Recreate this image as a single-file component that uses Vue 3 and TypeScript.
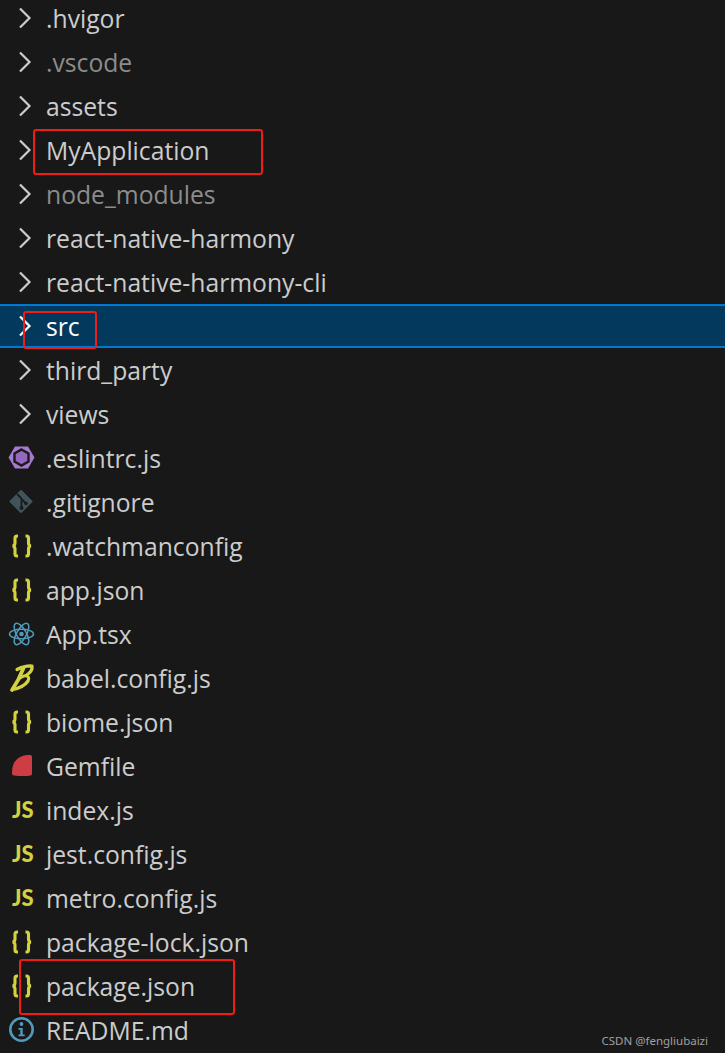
<script setup lang="ts">
type Row = { name: string; kind: string; muted?: boolean; selected?: boolean };

const rows: Row[] = [
  { name: '.hvigor', kind: 'folder' },
  { name: '.vscode', kind: 'folder', muted: true },
  { name: 'assets', kind: 'folder' },
  { name: 'MyApplication', kind: 'folder' },
  { name: 'node_modules', kind: 'folder', muted: true },
  { name: 'react-native-harmony', kind: 'folder' },
  { name: 'react-native-harmony-cli', kind: 'folder' },
  { name: 'src', kind: 'folder', selected: true },
  { name: 'third_party', kind: 'folder' },
  { name: 'views', kind: 'folder' },
  { name: '.eslintrc.js', kind: 'eslint' },
  { name: '.gitignore', kind: 'git' },
  { name: '.watchmanconfig', kind: 'json' },
  { name: 'app.json', kind: 'json' },
  { name: 'App.tsx', kind: 'react' },
  { name: 'babel.config.js', kind: 'babel' },
  { name: 'biome.json', kind: 'json' },
  { name: 'Gemfile', kind: 'gem' },
  { name: 'index.js', kind: 'js' },
  { name: 'jest.config.js', kind: 'js' },
  { name: 'metro.config.js', kind: 'js' },
  { name: 'package-lock.json', kind: 'json' },
  { name: 'package.json', kind: 'json' },
  { name: 'README.md', kind: 'info' },
];
</script>

<template>
  <div class="tree">
    <div class="list">
      <div
        v-for="row in rows"
        :key="row.name"
        class="row"
        :class="{ muted: row.muted, selected: row.selected }"
      >
        <span class="icon">
          <svg v-if="row.kind === 'folder'" width="36" height="36" viewBox="0 0 36 36">
            <path d="M20 8.500 L29.500 18 L20 27.500" fill="none" class="chev" stroke-width="2.200" />
          </svg>
          <svg v-else-if="row.kind === 'eslint'" width="36" height="36" viewBox="0 0 36 36">
            <path d="M15 6.500h13l6.500 11-6.500 11H15l-6.500-11z" fill="#a779d0" />
            <path d="M21.500 9.500l7 4v8l-7 4-7-4v-8z" fill="#9568bd" stroke="#1b1b1b" stroke-width="2.400" />
          </svg>
          <svg v-else-if="row.kind === 'git'" width="36" height="36" viewBox="0 0 36 36">
            <path d="M21 7 L31.500 17.500 L21 28 L10.500 17.500z" fill="#41535b" stroke="#41535b" stroke-width="2" stroke-linejoin="round" />
            <path d="M17 10 L21.500 14.500 V24 M21.500 15 L26 19.500" fill="none" stroke="#1b1b1b" stroke-width="1.800" />
            <circle cx="21.500" cy="24" r="2" fill="#1b1b1b" />
            <circle cx="26" cy="19.500" r="1.800" fill="#1b1b1b" />
          </svg>
          <svg v-else-if="row.kind === 'json'" width="36" height="36" viewBox="0 0 36 36">
            <path d="M18 8h-1q-2 0-2 2v5q0 2.500-2.300 3 2.300.5 2.300 3v5q0 2 2 2h1" fill="none" stroke="#d2d23f" stroke-width="3.100" />
            <path d="M25.500 8h1q2 0 2 2v5q0 2.500 2.300 3-2.300.5-2.300 3v5q0 2-2 2h-1" fill="none" stroke="#d2d23f" stroke-width="3.100" />
          </svg>
          <svg v-else-if="row.kind === 'react'" width="36" height="36" viewBox="0 0 36 36">
            <g fill="none" stroke="#519aba" stroke-width="1.500">
              <ellipse cx="21.500" cy="18" rx="12" ry="4.800" />
              <ellipse cx="21.500" cy="18" rx="12" ry="4.800" transform="rotate(60 21.500 18)" />
              <ellipse cx="21.500" cy="18" rx="12" ry="4.800" transform="rotate(120 21.500 18)" />
            </g>
            <circle cx="21.500" cy="18" r="2.300" fill="#519aba" />
          </svg>
          <svg v-else-if="row.kind === 'babel'" width="36" height="36" viewBox="0 0 36 36">
            <g fill="none" stroke="#d2d23f" stroke-linejoin="round" stroke-linecap="round">
              <path d="M17 9.500 Q25 5.500 32 6 Q33 11 26 15.500 Q30 17 28 21 Q24 27 13 29.500" stroke-width="3.200" />
              <path d="M23.500 8 Q19 20 12 30" stroke-width="3.800" />
              <path d="M20 18 Q23 16 26 15.500" stroke-width="2.800" />
            </g>
          </svg>
          <svg v-else-if="row.kind === 'gem'" width="36" height="36" viewBox="0 0 36 36">
            <path d="M30.500 7 H27 Q18.500 8 14.500 14 Q12 18 12 25.500 Q12 27.500 14 27.500 Q24 28.500 30.500 27.500 Q32 27.500 32 25.500 V9 Q32 7 30.500 7z" fill="#cc3e44" />
          </svg>
          <span v-else-if="row.kind === 'js'" class="js">JS</span>
          <svg v-else-if="row.kind === 'info'" width="36" height="36" viewBox="0 0 36 36">
            <circle cx="21.500" cy="17.500" r="11.200" fill="none" stroke="#519aba" stroke-width="2.600" />
            <circle cx="21.500" cy="12" r="1.900" fill="#519aba" />
            <path d="M18.500 16h4.200v6.500h2v1.800h-6.200v-1.800h1.800v-4.700h-1.800z" fill="#519aba" />
          </svg>
        </span>
        <span class="name">{{ row.name }}</span>
      </div>
    </div>

    <div class="mark box-app"></div>
    <div class="mark box-src"></div>
    <div class="mark box-pkg"></div>
    <div class="watermark">CSDN @fengliubaizi</div>
  </div>
</template>

<style scoped>
.tree {
  position: relative;
  width: 725px;
  height: 1053px;
  overflow: hidden;
  background: #181818;
  font-family: "Open Sans", "Noto Sans", sans-serif;
}

.list {
  margin-top: -4px;
}

.row {
  display: flex;
  align-items: center;
  height: 44px;
  box-sizing: border-box;
  color: #cccccc;
  font-size: 24.7px;
}

.row.muted {
  color: #8c8c8c;
}

.row.selected {
  background: #04395e;
  color: #ffffff;
  border-top: 2px solid #0078d4;
  border-bottom: 2px solid #0078d4;
}

.icon {
  display: flex;
  align-items: center;
  flex: none;
  width: 46px;
  height: 36px;
}

.chev {
  stroke: #cccccc;
}

.selected .chev {
  stroke: #ffffff;
}

.js {
  width: 100%;
  padding-left: 12px;
  box-sizing: border-box;
  color: #d2d23f;
  font-family: Lato, sans-serif;
  font-size: 22px;
  font-weight: 900;
  line-height: 1;
}

.name {
  white-space: nowrap;
}

.mark {
  position: absolute;
  box-sizing: border-box;
  border: 2px solid #f01d14;
  border-radius: 3px;
}

.box-app {
  left: 33px;
  top: 129px;
  width: 230px;
  height: 46px;
}

.box-src {
  left: 23px;
  top: 311px;
  width: 74px;
  height: 38px;
}

.box-pkg {
  left: 19px;
  top: 959px;
  width: 216px;
  height: 56px;
}

.watermark {
  position: absolute;
  right: 17px;
  bottom: 5px;
  color: #a0a0a0;
  font-family: "Noto Sans", sans-serif;
  font-size: 11.5px;
  white-space: nowrap;
}
</style>
